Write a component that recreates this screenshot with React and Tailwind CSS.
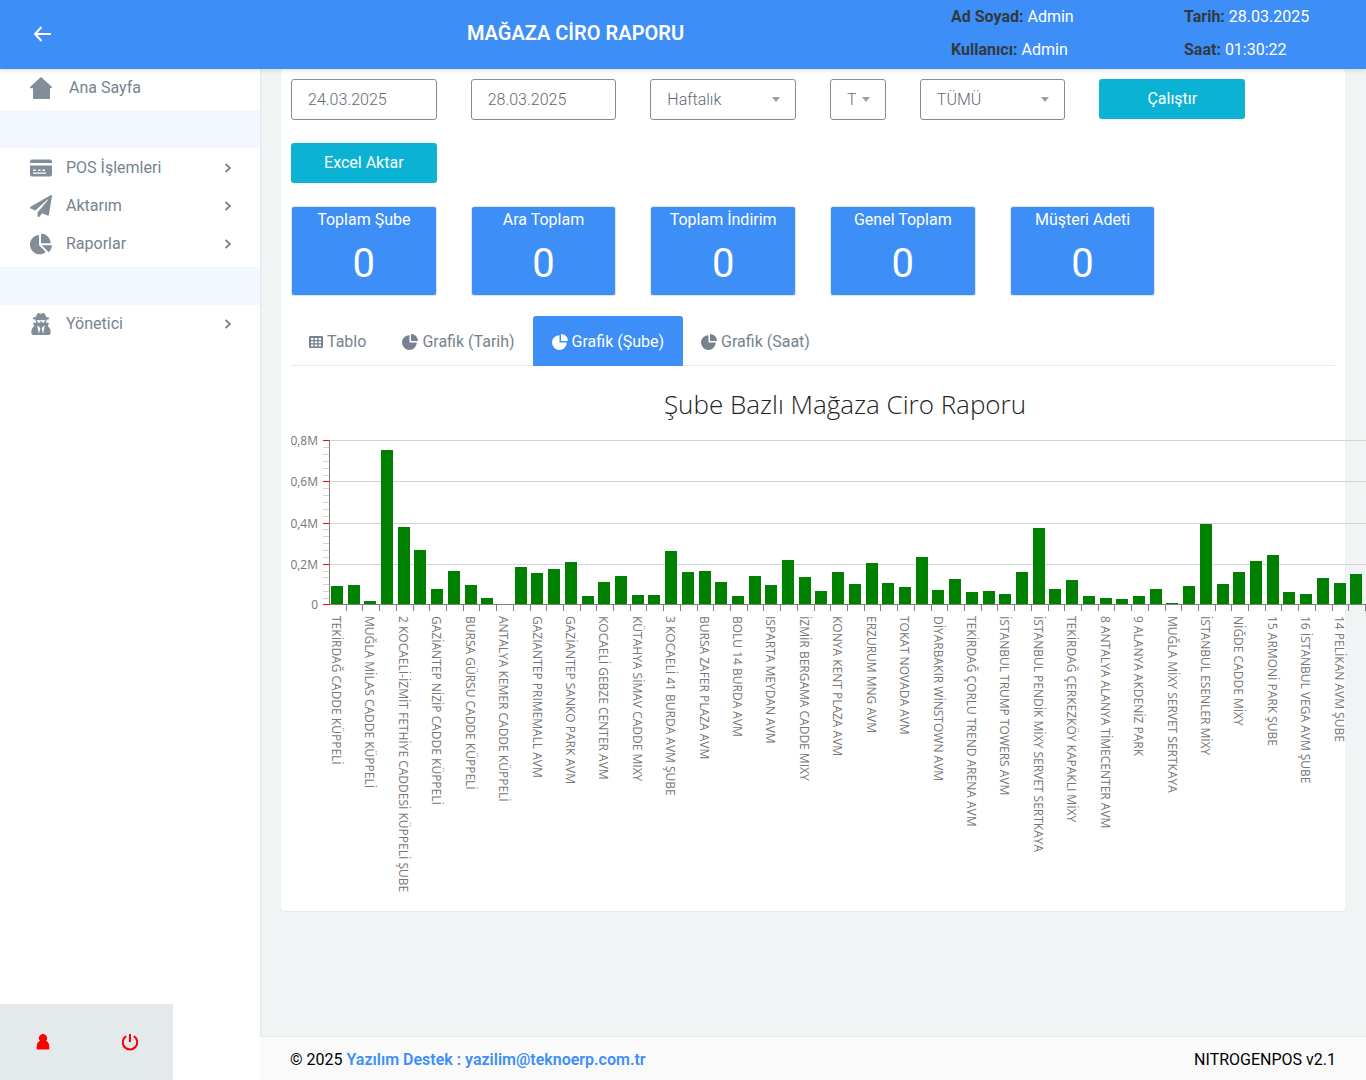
import { useState } from "react";
import { FaChartPie, FaPaperPlane, FaUserSecret } from "react-icons/fa";

const stats = [
  { title: "Toplam Şube", value: 0 },
  { title: "Ara Toplam", value: 0 },
  { title: "Toplam İndirim", value: 0 },
  { title: "Genel Toplam", value: 0 },
  { title: "Müşteri Adeti", value: 0 },
];

const tabs = [
  { id: "tablo", label: "Tablo", icon: TableIcon },
  { id: "tarih", label: "Grafik (Tarih)", icon: PieIcon },
  { id: "sube", label: "Grafik (Şube)", icon: PieIcon },
  { id: "saat", label: "Grafik (Saat)", icon: PieIcon },
];

// bar heights on the 0 - 0,8M axis (164 units)
const values = [
  18, 19, 3, 154, 77, 54, 15, 33, 19, 6, 0, 37, 31, 35, 42, 8, 22, 28, 9, 9, 53, 32, 33, 22, 8, 28, 19, 44, 27, 13, 32,
  20, 41, 21, 17, 47, 14, 25, 12, 13, 10, 32, 76, 15, 24, 8, 6, 5, 8, 15, 1, 18, 80, 20, 32, 43, 49, 12, 10, 26, 21, 30,
];

// only every second branch gets a label
const branches = [
  "TEKİRDAĞ CADDE KÜPPELİ",
  "MUĞLA MİLAS CADDE KÜPPELİ",
  "2 KOCAELİ-İZMİT FETHİYE CADDESİ KÜPPELİ ŞUBE",
  "GAZİANTEP NİZİP CADDE KÜPPELİ",
  "BURSA GÜRSU CADDE KÜPPELİ",
  "ANTALYA KEMER CADDE KÜPPELİ",
  "GAZIANTEP PRIMEMALL AVM",
  "GAZİANTEP SANKO PARK AVM",
  "KOCAELİ GEBZE CENTER AVM",
  "KÜTAHYA SİMAV CADDE MIXY",
  "3 KOCAELİ 41 BURDA AVM ŞUBE",
  "BURSA ZAFER PLAZA AVM",
  "BOLU 14 BURDA AVM",
  "ISPARTA MEYDAN AVM",
  "İZMİR BERGAMA CADDE MIXY",
  "KONYA KENT PLAZA AVM",
  "ERZURUM MNG AVM",
  "TOKAT NOVADA AVM",
  "DİYARBAKIR WİNSTOWN AVM",
  "TEKİRDAĞ ÇORLU TREND ARENA AVM",
  "İSTANBUL TRUMP TOWERS AVM",
  "İSTANBUL PENDİK MİXY SERVET SERTKAYA",
  "TEKİRDAĞ ÇERKEZKÖY KAPAKLI MİXY",
  "8 ANTALYA ALANYA TİMECENTER AVM",
  "9 ALANYA AKDENİZ PARK",
  "MUĞLA MİXY SERVET SERTKAYA",
  "İSTANBUL ESENLER MİXY",
  "NİĞDE CADDE MİXY",
  "15 ARMONİ PARK ŞUBE",
  "16 İSTANBUL VEGA AVM ŞUBE",
  "14 PELİKAN AVM ŞUBE",
];

function HomeIcon() {
  return (
    <svg viewBox="0 0 22 22" className="size-[22px]" fill="currentColor" aria-hidden="true">
      <path d="M11 0 21.800 9.800q.7 1.400-.8 1.400H20V21q0 1-1 1H4q-1 0-1-1v-9.800H1q-1.500 0-.8-1.400z" />
    </svg>
  );
}

function CardIcon() {
  return (
    <svg viewBox="0 0 22 18" className="h-[18px] w-[22px]" fill="currentColor" aria-hidden="true">
      <path d="M2 .5h18q2 0 2 2V4H0V2.500q0-2 2-2z" />
      <path
        fillRule="evenodd"
        d="M0 6.500h22v9q0 2-2 2H2q-2 0-2-2zm3 4v1.500h3v-1.500zm5 0v1.500h2.500v-1.500zm4.500 0v1.500H15v-1.500zM3 13.500v1.200h13v-1.200z"
      />
    </svg>
  );
}

function TableIcon() {
  return (
    <svg viewBox="0 0 14 12" className="h-3 w-3.5" fill="currentColor" aria-hidden="true">
      <path
        fillRule="evenodd"
        d="M1 0h12q1 0 1 1v10q0 1-1 1H1q-1 0-1-1V1q0-1 1-1zm1 2v2h2.400V2zm3.800 0v2h2.400V2zm3.800 0v2H12V2zM2 5.200v2h2.400v-2zm3.800 0v2h2.400v-2zm3.800 0v2H12v-2zM2 8.400v2h2.400v-2zm3.800 0v2h2.400v-2zm3.800 0v2H12v-2z"
      />
    </svg>
  );
}

function PieIcon() {
  return (
    <svg viewBox="0 0 16 16" className="size-4" fill="currentColor" aria-hidden="true">
      <path d="M7.500 1.200V8.500h7.300A7.400 7.400 0 1 1 7.500 1.200z" />
      <path d="M9 0a7 7 0 0 1 7 7H9z" />
    </svg>
  );
}

function ChevronIcon() {
  return (
    <svg viewBox="0 0 8 10" className="h-2.5 w-2" fill="none" stroke="currentColor" strokeWidth="1.7" aria-hidden="true">
      <path d="M1.500 1 6 5 1.500 9" />
    </svg>
  );
}

function UserIcon() {
  return (
    <svg viewBox="0 0 14 16" className="h-4 w-3.5" fill="currentColor" aria-hidden="true">
      <path d="M7 0a4 4 0 0 1 3 6.800q3.300 1.400 3.300 5.700v2q0 1-1 1H1.700q-1 0-1-1v-2Q.7 8.200 4 6.800A4 4 0 0 1 7 0z" />
    </svg>
  );
}

function PowerIcon() {
  return (
    <svg viewBox="0 0 18 18" className="size-[18px]" fill="none" stroke="currentColor" strokeWidth="2" aria-hidden="true">
      <path d="M9 1v8M5.200 3.200a7.200 7.200 0 1 0 7.600 0" />
    </svg>
  );
}

function MenuItem({ icon: Icon, label, arrow = true }) {
  return (
    <a href="#" className="flex h-[38px] items-center pl-[30px] pr-7 text-[#76838f]">
      <span className="flex w-9 items-center text-[22px] text-[#818e99]">
        <Icon />
      </span>
      <span className={arrow ? "flex-1" : "flex-1 pl-[3px]"}>{label}</span>
      {arrow && <ChevronIcon />}
    </a>
  );
}

function SelectBox({ label, options, className }) {
  return (
    <div className={`relative ${className}`}>
      <select
        aria-label={label}
        className="h-[41px] w-full appearance-none rounded-[3px] border border-[#8b8b8b] bg-white pl-4 pr-[29px] font-light text-[#5e6a74] focus:outline-none"
      >
        {options.map((o) => (
          <option key={o}>{o}</option>
        ))}
      </select>
      <svg viewBox="0 0 8 5" className="pointer-events-none absolute right-4 top-[18px] h-[5px] w-2 fill-[#97a1a9]">
        <path d="M0 0h8L4 5z" />
      </svg>
    </div>
  );
}

function BranchChart() {
  const left = 38.5;
  const base = 238.5;
  const step = 16.71;
  const tickY = (i) => base - Math.max(0, Math.round(i * 6.86 - 0.9));

  return (
    <svg width="1108" height="535" className="block max-w-none" fontFamily="'Open Sans', 'Noto Sans', sans-serif">
      <text x="554" y="48" textAnchor="middle" fontSize="26" fontWeight="300" fill="#232323">
        Şube Bazlı Mağaza Ciro Raporu
      </text>

      {[0, 6, 12, 18, 24].map((i) => (
        <g key={i}>
          {i > 0 && <line x1={left} x2="1108" y1={tickY(i)} y2={tickY(i)} stroke="#d3d3d3" />}
          <text x="27" y={tickY(i) + 4} textAnchor="end" fontSize="12" fill="#767676">
            {i === 0 ? "0" : `0,${i / 3}M`}
          </text>
        </g>
      ))}

      {Array.from({ length: 25 }, (_, i) => (
        <line
          key={i}
          x1="32"
          x2={i % 6 === 0 ? 39 : 38}
          y1={tickY(i)}
          y2={tickY(i)}
          stroke={i % 6 === 0 ? "#ff0000" : "#d3d3d3"}
        />
      ))}

      {values.map((v, i) => (
        <rect key={i} x={Math.round(left + i * step + 1.4)} y={238 - v} width="12" height={v} fill="#008000" />
      ))}

      <path d={`M${left} 74V238.500H1108`} fill="none" stroke="#7f7f7f" />
      {Array.from({ length: 63 }, (_, i) => {
        const x = Math.floor(left + (i + 1) * step) + 0.5;
        return <line key={i} x1={x} x2={x} y1="239" y2="245" stroke="#7f7f7f" />;
      })}

      {branches.map((name, i) => (
        <text
          key={name}
          transform={`translate(${Math.round(41 + i * 2 * step)} 250) rotate(90)`}
          fontSize="12"
          fill="#767676"
        >
          {name}
        </text>
      ))}
    </svg>
  );
}

export default function App() {
  const [startDate, setStartDate] = useState("24.03.2025");
  const [endDate, setEndDate] = useState("28.03.2025");
  const [activeTab, setActiveTab] = useState("sube");

  return (
    <div className="flex min-h-screen flex-col overflow-hidden bg-[#f1f4f5] font-[Roboto,sans-serif] text-base">
      <header className="relative grid h-[69px] grid-cols-[200fr_751fr_233fr_182fr] bg-[#3e8ef7] text-white shadow-[0_2px_4px_rgba(0,0,0,0.1)]">
        <div className="flex items-center pb-0.5 pl-[33px]">
          <button type="button" aria-label="Geri">
            <svg viewBox="0 0 18 16" className="h-4 w-[18px]" fill="none" stroke="currentColor" strokeWidth="2">
              <path d="M8.500 1 2 8l6.500 7M2 8h16" />
            </svg>
          </button>
        </div>
        <h1 className="flex items-center justify-center pb-1 text-xl font-semibold">MAĞAZA CİRO RAPORU</h1>
        <div className="leading-[33px]">
          <p>
            <b className="font-bold text-[#33393d]">Ad Soyad:</b> Admin
          </p>
          <p>
            <b className="font-bold text-[#33393d]">Kullanıcı:</b> Admin
          </p>
        </div>
        <div className="leading-[33px]">
          <p>
            <b className="font-bold text-[#33393d]">Tarih:</b> 28.03.2025
          </p>
          <p>
            <b className="font-bold text-[#33393d]">Saat:</b> 01:30:22
          </p>
        </div>
      </header>

      <div className="flex flex-1">
        <aside className="flex w-[260px] shrink-0 flex-col justify-between bg-white shadow-[0_0_2px_rgba(0,0,0,0.15)]">
          <nav>
            <div className="pb-[3px]">
              <MenuItem icon={HomeIcon} label="Ana Sayfa" arrow={false} />
            </div>
            <div className="h-[38px] bg-[#f3f7ff]" />
            <div className="pb-1 pt-px">
              <MenuItem icon={CardIcon} label="POS İşlemleri" />
              <MenuItem icon={FaPaperPlane} label="Aktarım" />
              <MenuItem icon={FaChartPie} label="Raporlar" />
            </div>
            <div className="h-[38px] bg-[#f3f7ff]" />
            <MenuItem icon={FaUserSecret} label="Yönetici" />
          </nav>
          <div className="grid h-[76px] grid-cols-3 text-[#ff0000]">
            <a href="#" aria-label="Profil" className="flex items-center justify-center bg-[#e4e9ec]">
              <UserIcon />
            </a>
            <a href="#" aria-label="Çıkış" className="flex items-center justify-center bg-[#e4e9ec]">
              <PowerIcon />
            </a>
          </div>
        </aside>

        <div className="flex min-w-0 flex-1 flex-col">
          <main className="flex-1 px-[21px]">
            <section className="rounded bg-white p-2.5 shadow-[0_1px_1px_rgba(0,0,0,0.05)]">
              <form className="grid grid-cols-12 gap-x-[34px] gap-y-[23px]" onSubmit={(e) => e.preventDefault()}>
                <input
                  type="text"
                  aria-label="Başlangıç Tarihi"
                  value={startDate}
                  onChange={(e) => setStartDate(e.target.value)}
                  className="col-span-2 h-[41px] rounded-[3px] border border-[#8b8b8b] px-4 font-light text-[#5e6a74] focus:outline-none"
                />
                <input
                  type="text"
                  aria-label="Bitiş Tarihi"
                  value={endDate}
                  onChange={(e) => setEndDate(e.target.value)}
                  className="col-span-2 h-[41px] rounded-[3px] border border-[#8b8b8b] px-4 font-light text-[#5e6a74] focus:outline-none"
                />
                <SelectBox className="col-span-2" label="Periyot" options={["Haftalık", "Günlük", "Aylık"]} />
                <SelectBox className="col-span-1" label="Tür" options={["TÜMÜ"]} />
                <SelectBox className="col-span-2" label="Şube" options={["TÜMÜ"]} />
                <button type="submit" className="col-span-2 h-10 rounded-[3px] bg-[#0bb2d4] text-white">
                  Çalıştır
                </button>
                <button type="button" className="col-span-2 col-start-1 h-10 rounded-[3px] bg-[#0bb2d4] text-white">
                  Excel Aktar
                </button>
              </form>

              <div className="mt-[23px] grid grid-cols-12 gap-x-[34px]">
                {stats.map((s) => (
                  <div
                    key={s.title}
                    className="col-span-2 h-[90px] rounded-[3px] border border-[#dfe5e8] bg-[#3e8ef7] pt-px text-center text-white"
                  >
                    <h2 className="leading-6">{s.title}</h2>
                    <p className="pt-2 text-[40px] leading-[48px]">{s.value}</p>
                  </div>
                ))}
              </div>

              <div role="tablist" className="mt-5 flex h-[50px] border-b border-[#e4eaec]">
                {tabs.map(({ id, label, icon: Icon }) => (
                  <button
                    key={id}
                    type="button"
                    role="tab"
                    aria-selected={activeTab === id}
                    onClick={() => setActiveTab(id)}
                    className={
                      activeTab === id
                        ? "flex h-[50px] items-center gap-1 rounded-t-[3px] bg-[#3e8ef7] px-[19px] pt-0.5 text-white"
                        : "flex h-[50px] items-center gap-1 px-[18px] pt-0.5 text-[#76838f]"
                    }
                  >
                    <Icon />
                    {label}
                  </button>
                ))}
              </div>

              <BranchChart />
            </section>
          </main>

          <footer className="flex h-11 items-center justify-between border-t border-[#e4eaec] bg-[#fafafa] px-[30px] pt-0.5 text-black">
            <p>
              © 2025{" "}
              <a href="mailto:yazilim@teknoerp.com.tr" className="font-semibold text-[#3e8ef7]">
                Yazılım Destek : yazilim@teknoerp.com.tr
              </a>
            </p>
            <p>NITROGENPOS v2.1</p>
          </footer>
        </div>
      </div>
    </div>
  );
}
